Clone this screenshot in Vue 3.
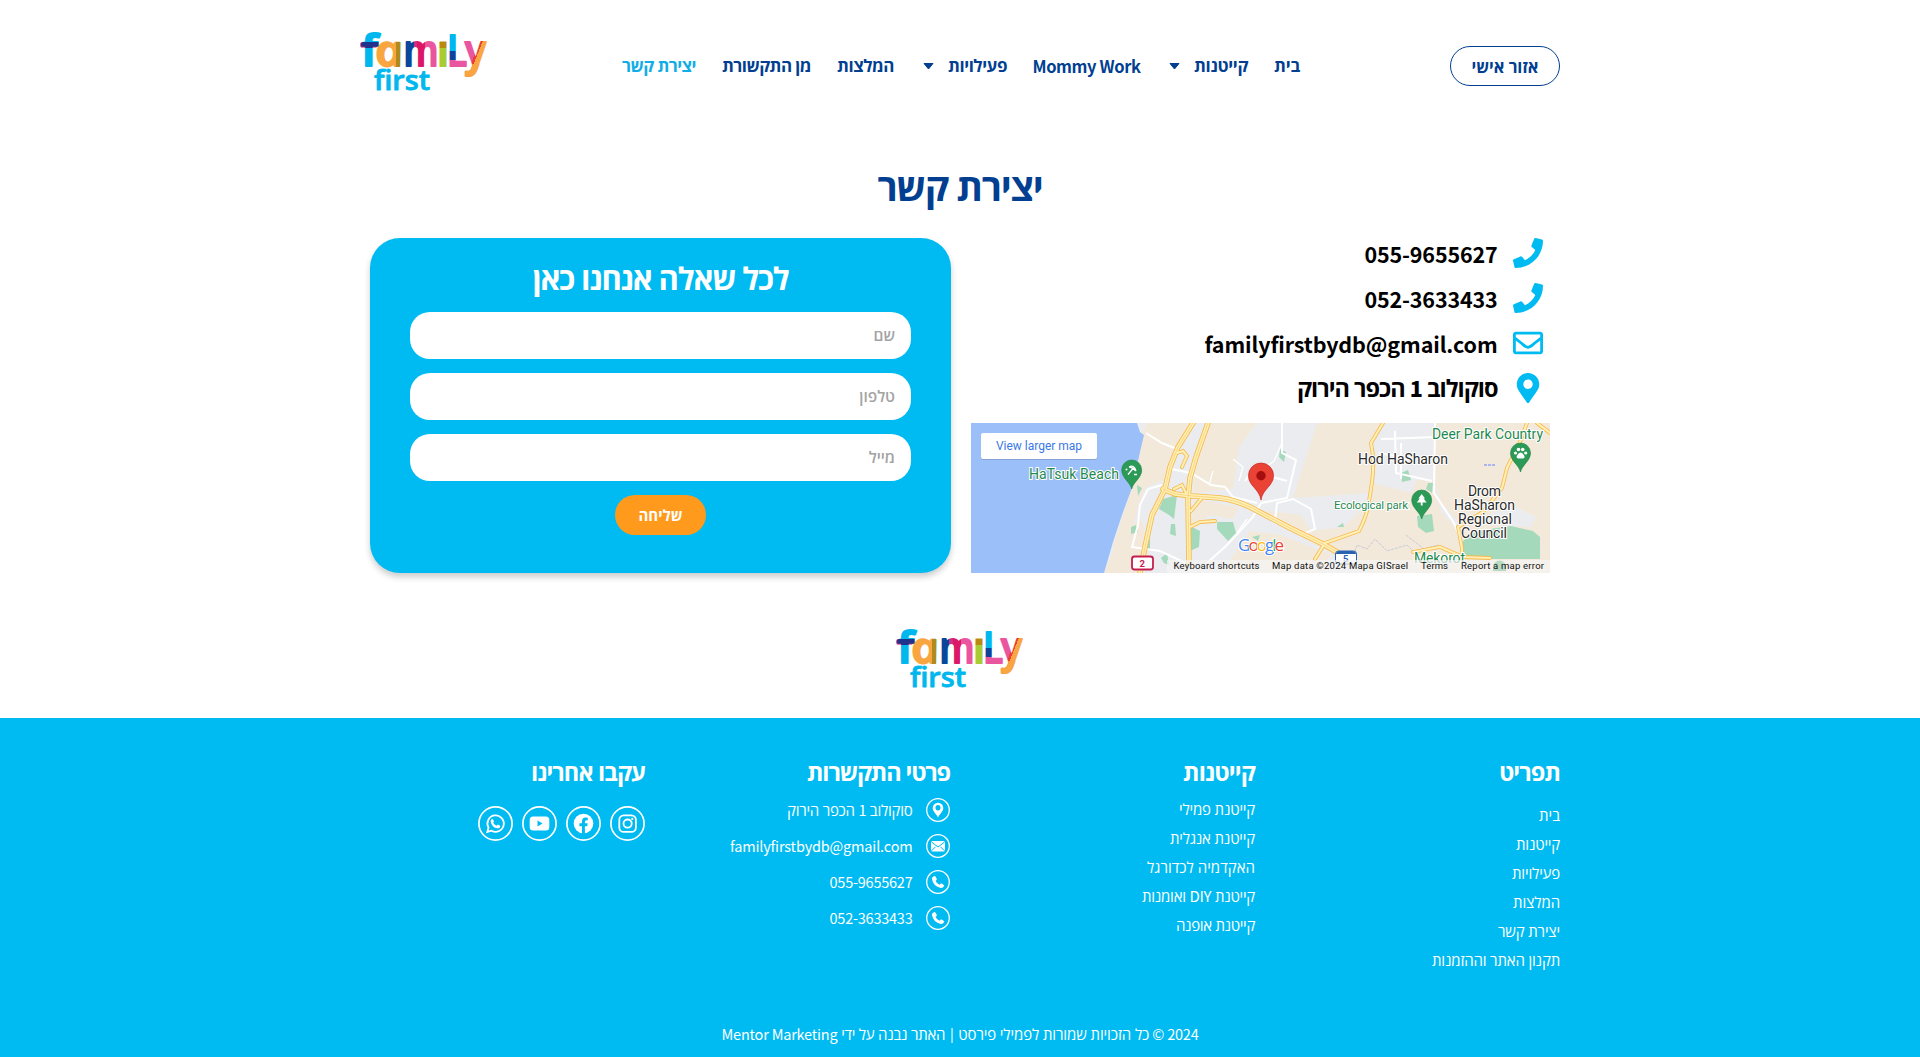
<script setup>
import { nextTick } from 'vue'

// Spreads letter spacing so that a label takes up the given width in pixels.
const vFit = {
  mounted(el, { value }) {
    nextTick(() => {
      const extra = value - el.getBoundingClientRect().width
      el.style.letterSpacing = (extra / el.textContent.trim().length).toFixed(3) + 'px'
    })
  }
}

const nav = [
  { t: 'בית', w: 26 },
  { t: 'קייטנות', w: 54, sub: true },
  { t: 'Mommy Work', w: 108, en: true },
  { t: 'פעילויות', w: 59, sub: true },
  { t: 'המלצות', w: 57 },
  { t: 'מן התקשורת', w: 89 },
  { t: 'יצירת קשר', w: 74, active: true }
]
const menu = [
  ['בית', 21], ['קייטנות', 44], ['פעילויות', 48], ['המלצות', 47], ['יצירת קשר', 62], ['תקנון האתר וההזמנות', 128]
]
const camps = [
  ['קייטנת פמילי', 76], ['קייטנת אנגלית', 85], ['האקדמיה לכדורגל', 108], ['קייטנת DIY ואומנות', 113], ['קייטנת אופנה', 79]
]
const fields = ['שם', 'טלפון', 'מייל']
const phonePath = 'M493.4 24.6l-104-24c-11.3-2.600-22.900 3.300-27.500 13.900l-48 112c-4.200 9.800-1.400 21.300 6.900 28l60.600 49.600c-36 76.700-98.900 140.500-177.200 177.200l-49.600-60.600c-6.800-8.300-18.200-11.100-28-6.900l-112 48C3.900 366.500-2 378.100.6 389.400l24 104C27.100 504.200 36.700 512 48 512c256.100 0 464-207.500 464-464 0-11.200-7.700-20.900-18.600-23.400z'
</script>

<template>
  <div class="page" dir="rtl">
    <svg width="0" height="0" class="defs" aria-hidden="true">
      <defs>
        <linearGradient id="lf" gradientUnits="userSpaceOnUse" x1="0" y1="0" x2="0" y2="36">
          <stop offset=".3" stop-color="#00b7ee" /><stop offset=".3" stop-color="#20348c" /><stop offset=".47" stop-color="#20348c" /><stop offset=".47" stop-color="#00b7ee" />
        </linearGradient>
        <linearGradient id="la" gradientUnits="userSpaceOnUse" x1="18" y1="0" x2="44" y2="0" gradientTransform="translate(7.400 0) skewX(-12)">
          <stop offset=".7" stop-color="#f9a540" /><stop offset=".7" stop-color="#b08a1c" /><stop offset=".84" stop-color="#b08a1c" /><stop offset=".84" stop-color="#a9cb35" />
        </linearGradient>
        <linearGradient id="lm" gradientUnits="userSpaceOnUse" x1="46" y1="0" x2="76" y2="0">
          <stop offset=".25" stop-color="#09479b" /><stop offset=".25" stop-color="#cd2f86" /><stop offset=".38" stop-color="#cd2f86" /><stop offset=".38" stop-color="#dc1866" /><stop offset=".62" stop-color="#dc1866" /><stop offset=".62" stop-color="#e9569f" />
        </linearGradient>
        <linearGradient id="li" gradientUnits="userSpaceOnUse" x1="0" y1="0" x2="0" y2="36">
          <stop offset=".48" stop-color="#b98a11" /><stop offset=".48" stop-color="#a9cb35" />
        </linearGradient>
        <linearGradient id="ll" gradientUnits="userSpaceOnUse" x1="0" y1="0" x2="0" y2="36">
          <stop offset=".56" stop-color="#00b7ee" /><stop offset=".56" stop-color="#10419a" /><stop offset=".8" stop-color="#10419a" /><stop offset=".8" stop-color="#e9569f" />
        </linearGradient>
        <linearGradient id="ly" gradientUnits="userSpaceOnUse" x1="107" y1="20" x2="122" y2="26">
          <stop offset=".52" stop-color="#e9569f" /><stop offset=".52" stop-color="#ea3e3c" /><stop offset=".68" stop-color="#ea3e3c" /><stop offset=".68" stop-color="#f9a540" />
        </linearGradient>
        <linearGradient id="ly2" gradientUnits="userSpaceOnUse" x1="0" y1="0" x2="0" y2="48">
          <stop offset=".68" stop-color="#f9a540" stop-opacity="0" /><stop offset=".7" stop-color="#f9a540" />
        </linearGradient>
        <clipPath id="ci"><rect x="78" y="10.500" width="10" height="27" /></clipPath>
        <symbol id="logo" viewBox="0 0 128 62">
          <g class="fam" stroke-width="2" stroke-linejoin="round" direction="ltr">
            <path d="M3 13.900H14.500" stroke="#e9569f" stroke-width="5.800" stroke-linecap="round" />
            <text x="1" y="34.500" fill="url(#lf)" stroke="url(#lf)" textLength="17" lengthAdjust="spacingAndGlyphs">f</text>
            <text class="slant" x="17.500" y="34.500" fill="url(#la)" stroke="url(#la)" transform="translate(-7.400 0) skewX(12)" textLength="28" lengthAdjust="spacingAndGlyphs">a</text>
            <text x="43.500" y="34.500" fill="url(#lm)" stroke="url(#lm)" textLength="35" lengthAdjust="spacingAndGlyphs">m</text>
            <text x="77" y="34.500" fill="url(#li)" stroke="url(#li)" clip-path="url(#ci)">i</text>
            <text x="87" y="34.500" fill="url(#ll)" stroke="url(#ll)" stroke-width="2" textLength="20" lengthAdjust="spacingAndGlyphs">L</text>
            <text x="105" y="34.500" fill="url(#ly)" stroke="url(#ly)" textLength="21" lengthAdjust="spacingAndGlyphs">y</text>
            <text x="105" y="34.500" fill="url(#ly2)" stroke="url(#ly2)" textLength="21" lengthAdjust="spacingAndGlyphs" aria-hidden="true">y</text>
          </g>
          <text class="fst" direction="ltr" x="14" y="58.500" fill="#00b7ee" stroke="#00b7ee" stroke-width=".8" stroke-linejoin="round" textLength="56" lengthAdjust="spacingAndGlyphs">first</text>
        </symbol>
      </defs>
    </svg>

    <header class="top">
      <a class="account"><span v-fit="67">אזור אישי</span></a>
      <nav class="nav">
        <a v-for="n in nav" :key="n.t" class="navitem" :class="{ active: n.active, en: n.en }">
          <span v-fit="n.w">{{ n.t }}</span>
          <svg v-if="n.sub" class="caret" width="11" height="7" viewBox="0 0 11 7"><path d="M1 .5h9L5.500 6z" fill="currentColor" stroke="currentColor" stroke-linejoin="round" /></svg>
        </a>
      </nav>
      <svg class="logo" width="128" height="62"><use href="#logo" /></svg>
    </header>

    <h1><span v-fit="165">יצירת קשר</span></h1>

    <main class="main">
      <section class="info">
        <ul class="contact">
          <li><svg width="30" height="30" viewBox="0 0 512 512"><path :d="phonePath" fill="currentColor" /></svg><span v-fit="133" class="en" dir="ltr">055-9655627</span></li>
          <li><svg width="30" height="30" viewBox="0 0 512 512"><path :d="phonePath" fill="currentColor" /></svg><span v-fit="133" class="en" dir="ltr">052-3633433</span></li>
          <li><svg width="30" height="30" viewBox="0 0 512 512"><path fill="currentColor" d="M464 64H48C21.500 64 0 85.500 0 112v288c0 26.500 21.500 48 48 48h416c26.500 0 48-21.500 48-48V112c0-26.500-21.500-48-48-48zm0 48v40.800c-22.400 18.300-58.200 46.700-134.600 106.500-16.800 13.200-50.200 45.100-73.400 44.700-23.200.4-56.600-31.500-73.400-44.700C106.200 199.500 70.400 171.100 48 152.800V112h416zM48 400V214.400c22.900 18.300 55.400 43.900 104.900 82.600 21.900 17.200 60.100 55.200 103.100 55 42.700.2 80.500-37.200 103.100-54.900 49.500-38.800 82-64.400 104.900-82.700V400H48z" /></svg><span v-fit="293" class="en" dir="ltr">familyfirstbydb@gmail.com</span></li>
          <li><svg width="30" height="30" viewBox="-64 0 512 512"><path fill="currentColor" d="M172.300 501.700C27 291 0 269.400 0 192 0 86 86 0 192 0s192 86 192 192c0 77.400-27 99-172.300 309.700-9.500 13.800-29.900 13.800-39.400 0zM192 272c44.200 0 80-35.800 80-80s-35.800-80-80-80-80 35.800-80 80 35.800 80 80 80z" /></svg><span v-fit="200.500">סוקולוב <b class="en">1</b> הכפר הירוק</span></li>
        </ul>
        <svg class="map" width="579" height="150" viewBox="0 0 579 150" direction="ltr">
          <rect width="579" height="150" fill="#eaecef" />
          <g fill="#f3e9db">
            <path d="M172 8L176 0H222L206 28 198 55 175 64 168 80 156 128 142 124 160 66z" />
            <path d="M240 0H286L268 24 262 66 222 70 224 40zM346 0H411L400 20 402 70 322 75zM279 86L330 92 340 108 372 104 396 82 402 60 440 70 448 50 463 60 470 90 490 108V150H400L376 140 320 108zM464 0H579V150H492V104L470 80 464 60z" />
            <path d="M224 76L268 84 262 96 240 92 220 104zM279 108L310 112 360 132 350 150H250z" />
            <path d="M150 110L170 96 174 110 166 150H133z" />
          </g>
          <path d="M520 90l25-6 20 10-5 10-40-2zM410 6l50 8-2 44-48-4z" fill="#eaecef" />
          <path d="M0 0H166L169 9 173 12 169 29 161 65 152 89 142 119 133 150H0z" fill="#9bbff9" />
          <g fill="#a4dabb">
            <path d="M188 86L192 76 206 72 203 96 198 92zM246 99L262 99 265 110 257 118 246 106zM219 103L229 108 228 124 219 128zM200 101h4l1 12-6-2zM160 104l5-2 2 7-7 2zM446 93l15-2 2 17-8 2-8-6zM492 118L506 108 540 103 562 108 569 114V136H492zM430 50l7-3 3 10-9 2zM457 60h5l-1 10-6-4zM309 26l6 3-2 10-5-5zM281 114l8-2-2 6zM366 104l6-4 1 4zM166 62l5 3-4 8zM173 116h6v10h-6zM190 135l6-5 2 12-5-2z" />
          </g>
          <g fill="none" stroke="#fff" stroke-width="2">
            <path d="M175 10l16 10 20 8M191 62l-14 4-8 16-2 20-6 22 28 4 30 14M200 46l20 4 20 12 14 2 8 10 24 6M290 80l-8 14-26 28-20 18M311 0v30l14 7-9 38-26 5M284 44l-10 14M294 52l22 6M424 8l1 42 36 8M410 16l55-2M464 0l-1 70 20 30 8 20M322 76l18 10 4 20-14 6-26-14 2-18zM430 20v36M408 30l22 4" />
            <path d="M242 48l-4 14M262 36l10 8-4 14M311 20l-8 18-14 10M276 96l-10 14" stroke-width="1.300" />
          </g>
          <path d="M380 140l6-18 10 4 8-10 12 12 20-6 14 14 18-4M435 112l18 14 14-4" fill="none" stroke="#c7cbda" stroke-dasharray="3 1" />
          <g v-for="k in 3" :key="k" fill="none" stroke-linecap="round" :stroke="['#f6b84a', '#ffefb5', '#f8cd6c'][k - 1]">
            <path :stroke-width="[5.500, 3.800, .7][k - 1]" d="M222 0L207 24 199 44 194 66 181 92 174 124 169 150M237 0L225 34 219 55 217 75 218 140M192 66L204 71 222 73 249 75Q264 77 279 84L319 105 352 121 366 129" />
            <path v-if="k < 3" :stroke-width="[3.800, 2.200][k - 1]" d="M412 0L400 20Q404 38 401 59T396 88 388 108L354 120 344 136M556 0L549 19 536 45 531 65 512 89 487 104 491 125 491 134M566 0L579 10M442 129L469 124 492 134 519 135M206 30L212 28 216 33 211 44M219 104L229 99 244 98M203 66l8-4 5 10M220 88l10-12" />
          </g>
          <path d="M513 42h11" stroke="#a9b4f0" stroke-width="2" stroke-dasharray="3 1" />

          <g class="lbl">
            <g class="grn">
              <text x="58" y="56" textLength="90" font-size="14">HaTsuk Beach</text>
              <text x="461" y="16" textLength="111" font-size="14">Deer Park Country</text>
              <text x="363" y="85.500" textLength="74" font-size="11.500">Ecological park</text>
              <text x="443" y="140" textLength="51" font-size="14">Mekorot</text>
            </g>
            <text x="387" y="41" textLength="90" font-size="14">Hod HaSharon</text>
            <text x="497" y="73" textLength="33" font-size="14">Drom</text>
            <text x="483" y="87" textLength="61" font-size="14">HaSharon</text>
            <text x="487" y="101" textLength="54" font-size="14">Regional</text>
            <text x="490" y="115" textLength="46" font-size="14">Council</text>
          </g>
          <g v-for="p in [[160.7, 37], [549.500, 20], [450.700, 67]]" :key="p[0]" :transform="`translate(${p[0]} ${p[1]})`">
            <path d="M0 29C-1.500 22-10 18-10 10A10 10 0 0 1 10 10C10 18 1.500 22 0 29z" fill="#2b9a56" stroke="#1d7f42" stroke-width=".6" />
          </g>
          <path d="M158 44q5-3 7 4M158 44q3 0 7 4M162 45.500l-5 6M163 51.500h3" fill="none" stroke="#fff" stroke-width="1.300" />
          <g fill="#fff">
            <circle cx="155.500" cy="46.500" r="1" />
            <circle cx="544.500" cy="30" r="1.600" /><circle cx="547.500" cy="26.500" r="1.800" /><circle cx="551.700" cy="26.500" r="1.800" /><circle cx="554.700" cy="30" r="1.600" />
            <path d="M549.600 29.500q2 0 3.500 3t-1.500 3h-4q-3 0-1.500-3t3.500-3z" />
            <path d="M450.700 71l3.300 4.500h-1.400l3 4h-4v3h-1.800v-3h-4l3-4h-1.400z" />
          </g>
          <path d="M522 144a6.500 6.500 0 0 1 13 0v4h-13z" fill="#2b9a56" />
          <path d="M290 77C288.500 66 277.500 63 277.500 52.500A12.500 12.500 0 0 1 302.500 52.500C302.500 63 291.500 66 290 77z" fill="#ea4335" stroke="#c5221f" stroke-width=".7" />
          <circle cx="290" cy="52.700" r="4.700" fill="#a50e0e" />
          <rect x="364.500" y="128" width="21" height="13" rx="3" fill="#fff" stroke="#2b62b0" />
          <path d="M365 131q0-3 4-3h12q4 0 4 3z" fill="#2b62b0" />
          <text x="372" y="138.500" class="road" fill="#2b62b0">5</text>
          <rect x="196" y="137" width="383" height="13" fill="#f5f5f5" opacity=".7" />
          <rect x="161" y="133.500" width="21" height="13" rx="2.500" fill="#fff" stroke="#c41e4e" stroke-width="1.800" />
          <text x="168.500" y="143.500" class="road" fill="#c41e4e">2</text>
          <text class="goog" x="267" y="127.500" textLength="46"><tspan fill="#4285f4">G</tspan><tspan fill="#ea4335">o</tspan><tspan fill="#fbbc04">o</tspan><tspan fill="#4285f4">g</tspan><tspan fill="#34a853">l</tspan><tspan fill="#ea4335">e</tspan></text>
          <g class="attr">
            <text x="202.500" y="146" textLength="86">Keyboard shortcuts</text>
            <text x="301" y="146" textLength="136">Map data ©2024 Mapa GISrael</text>
            <text x="450" y="146" textLength="27">Terms</text>
            <text x="490" y="146" textLength="83">Report a map error</text>
          </g>
          <rect x="10" y="11" width="116" height="26" rx="2" fill="#00000022" />
          <rect x="10" y="10" width="116" height="26" rx="2" fill="#fff" />
          <text x="25" y="27" textLength="86" class="larger">View larger map</text>
        </svg>
      </section>

      <section class="card">
        <h2><span v-fit="256">לכל שאלה אנחנו כאן</span></h2>
        <form class="form">
          <input v-for="f in fields" :key="f" type="text" :placeholder="f">
          <button type="button"><span v-fit="44">שליחה</span></button>
        </form>
      </section>
    </main>

    <div class="midlogo"><svg class="logo" width="128" height="62"><use href="#logo" /></svg></div>

    <footer class="foot">
      <div class="cols">
        <div class="col">
          <h3><span v-fit="61">תפריט</span></h3>
          <ul class="links menu"><li v-for="m in menu" :key="m[0]"><span v-fit="m[1]">{{ m[0] }}</span></li></ul>
        </div>
        <div class="col">
          <h3><span v-fit="72">קייטנות</span></h3>
          <ul class="links"><li v-for="m in camps" :key="m[0]"><span v-fit="m[1]"><template v-for="(w, i) in m[0].split(' ')" :key="i">{{ i ? ' ' : '' }}<span v-if="w === 'DIY'" class="en">{{ w }}</span><template v-else>{{ w }}</template></template></span></li></ul>
        </div>
        <div class="col">
          <h3><span v-fit="143">פרטי התקשרות</span></h3>
          <ul class="details">
            <li>
              <svg width="24" height="24" viewBox="0 0 24 24"><circle cx="12" cy="12" r="11.300" class="ring" /><path d="M12 19.500C10.500 16 6.700 13.500 6.700 10a5.300 5.300 0 0 1 10.600 0c0 3.500-3.800 6-5.300 9.500z" fill="#fff" /><path d="M9.500 9.500a2.500 2.500 0 0 1 5 0q0 3-2.500 3t-2.500-3z" fill="#00bbf2" /></svg>
              <span v-fit="125.500">סוקולוב <span class="en">1</span> הכפר הירוק</span>
            </li>
            <li>
              <svg width="24" height="24" viewBox="0 0 24 24"><circle cx="12" cy="12" r="11.300" class="ring" /><rect x="5" y="7" width="14" height="10.500" rx="1.500" fill="#fff" /><path d="M5.500 8l6.500 5 6.500-5M5.500 16.800l4-4M18.500 16.800l-4-4" fill="none" stroke="#00bbf2" /></svg>
              <span v-fit="182.500" class="en" dir="ltr">familyfirstbydb@gmail.com</span>
            </li>
            <li v-for="p in ['055-9655627', '052-3633433']" :key="p">
              <svg width="24" height="24" viewBox="0 0 24 24"><circle cx="12" cy="12" r="11.300" class="ring" /><path d="M6.400 7.300L8.300 6q.7-.3 1.100.4l1.300 2.300q.3.700-.2 1.200l-1 .9q1 2.600 4 4l1.300-1.200q.5-.3 1 0l2 1.300q.7.500.3 1.200-1.300 2.200-3.400 1.900-7.300-1.500-8.700-8.700 0-1.200.4-2z" fill="#fff" /></svg>
              <span v-fit="83" class="en" dir="ltr">{{ p }}</span>
            </li>
          </ul>
        </div>
        <div class="col">
          <h3><span v-fit="114">עקבו אחרינו</span></h3>
          <div class="social">
            <svg width="35" height="35" viewBox="0 0 35 35"><circle cx="17.500" cy="17.500" r="16.600" class="ring s" /><rect x="9.300" y="9.300" width="16.600" height="16.600" rx="4.500" class="ln" /><circle cx="17.600" cy="17.600" r="4.100" class="ln" /><circle cx="22.300" cy="12.900" r="1.100" fill="#fff" /></svg>
            <svg width="35" height="35" viewBox="0 0 35 35"><circle cx="17.500" cy="17.500" r="16.600" class="ring s" /><circle cx="17.500" cy="17.500" r="9.800" fill="#fff" /><path d="M16 27.800v-7.500h-2.600v-3H16v-2q0-3.700 3.600-3.800l2.200.2v2.500h-1.300q-1.600 0-1.600 1.500v1.600h2.800l-.5 3h-2.300v7.500z" fill="#00bbf2" /></svg>
            <svg width="35" height="35" viewBox="0 0 35 35"><circle cx="17.500" cy="17.500" r="16.600" class="ring s" /><rect x="7.700" y="10.500" width="19.600" height="14" rx="3.500" fill="#fff" /><path d="M15.500 14.500l5 3-5 3z" fill="#00bbf2" /></svg>
            <svg width="35" height="35" viewBox="0 0 35 35"><circle cx="17.500" cy="17.500" r="16.600" class="ring s" /><path d="M9.300 25.900l1.200-4.300a8.200 8.200 0 1 1 3.100 3.100z" class="ln" /><path d="M13.400 13.300l1.300-.4 1.300 2.600-.8 1.200q1.200 2.200 3.300 3l1.200-1.200 2.500 1.200q.2 2.500-2.600 2.600-5.800-.8-6.900-6.600.1-1.600.7-2.400z" fill="#fff" /></svg>
          </div>
        </div>
      </div>
      <p class="copy"><span v-fit="49.500" class="en">2024 ©&nbsp;</span><span v-fit="191">כל הזכויות שמורות לפמילי פירסט</span><span class="bar">|</span><span v-fit="108">האתר נבנה על ידי&nbsp;</span><span v-fit="116" class="en" dir="ltr">Mentor Marketing</span></p>
    </footer>
  </div>
</template>

<style>
body { margin: 0; background: #fff; }
</style>

<style scoped>
.page { position: relative; width: 1920px; height: 1057px; overflow: hidden; background: #fff; display: flex; flex-direction: column; font-family: "Open Sans", "Noto Sans CJK SC", sans-serif; color: #023f91; }
.page * { box-sizing: border-box; }
.defs { position: absolute; }
.en { font-family: "Noto Sans CJK SC", "Open Sans", sans-serif; }
span { white-space: nowrap; display: inline-block; flex: none; }
ul { list-style: none; margin: 0; padding: 0; }
h1, h2, h3, p { margin: 0; }
.logo { display: block; flex: none; }
.fam text { font: 600 43px "Open Sans", sans-serif; }
.fam text.slant { font-style: italic; }
.fst { font: 600 27px "Open Sans", sans-serif; }

.top { width: 1200px; margin: 0 auto; height: 132px; display: flex; align-items: flex-start; }
.account { width: 110px; height: 40px; margin-top: 46px; border: 1px solid #023f91; border-radius: 20px; display: flex; justify-content: center; font-size: 16.500px; font-weight: 700; line-height: 39px; }
.nav { display: flex; margin: 46px 150px 0 0; gap: 26px; height: 40px; line-height: 40px; font-size: 17px; font-weight: 700; }
.navitem { display: flex; align-items: center; }
.navitem.en { font-size: 16.500px; line-height: 38px; }
.navitem.en span { margin: -1px -.5px 0; }
.navitem.active { color: #12ade6; }
.caret { margin: 1px 14px 0 3px; }
.top .logo { margin: 31px auto 0 0; }

h1 { text-align: center; font-size: 38px; line-height: 50px; margin-top: 29px; }
.main { width: 1180px; margin: 27px auto 0; display: flex; justify-content: space-between; height: 335px; }
.info { width: 579px; display: flex; flex-direction: column; justify-content: space-between; }
.contact { padding: 0 7.500px; }
.contact li { height: 45px; display: flex; align-items: flex-start; gap: 15px; font-size: 23.500px; font-weight: 700; line-height: 30px; color: #000; }
.contact svg { color: #00bbf2; flex: none; }
.contact .en { font-size: 21.500px; line-height: 31px; }
.contact b.en { line-height: 0; }
.map { display: block; flex: none; }
.lbl text { font-family: Roboto, sans-serif; fill: #2b2b2b; stroke: #fff; stroke-width: 2px; paint-order: stroke; }
.lbl .grn text { fill: #1f8a50; }
.road { font: 700 9.500px Roboto, sans-serif; }
.goog { font: 500 17px "Open Sans", sans-serif; stroke: #fff; stroke-width: 2px; paint-order: stroke; }
.attr text { font: 9.500px Roboto, sans-serif; fill: #111; }
.larger { font: 12px Roboto, sans-serif; fill: #3b78e7; }

.card { width: 581px; height: 335px; border-radius: 30px; background: #00bbf2; padding: 18px 40px 0; box-shadow: 0 4px 6px rgba(0, 0, 0, .2); }
h2 { color: #fff; text-align: center; font-size: 31px; line-height: 44px; height: 56px; }
.form { display: flex; flex-direction: column; align-items: center; gap: 14px; }
.form input { width: 501px; height: 47px; border: 0; border-radius: 20px; background: #fff; padding: 0 16px 1px; font: 600 15.500px "Open Sans", sans-serif; letter-spacing: 0; }
.form input::placeholder { color: #a3a3a3; opacity: 1; }
.form button { width: 91px; height: 40px; border: 0; border-radius: 20px; background: #ff9a1c; color: #fff; font: 700 15px/38px "Open Sans", sans-serif; padding: 0; }

.midlogo { margin: 55px auto 0; height: 90px; }
.foot { background: #00bbf2; flex: 1; color: #fff; }
.cols { width: 1200px; margin: 0 auto; display: flex; height: 300px; padding-top: 37px; }
.col { width: 305px; flex: none; }
h3 { font-size: 23.500px; line-height: 34px; height: 39px; }
.links { font-size: 15px; line-height: 29px; padding-top: 1px; }
.links.menu { padding-top: 7px; }
.links li { height: 29px; }
.links .en { display: inline; line-height: 0; }
.details { padding-top: 4px; font-size: 15px; line-height: 24px; }
.details li { display: flex; gap: 13.500px; height: 36px; }
.details .en { font-size: 14.500px; line-height: 23px; }
.details span .en { line-height: 0; display: inline; }
.ring { fill: none; stroke: #fff; stroke-width: 1.300px; }
.ring.s { stroke-width: 1.700px; }
.ln { fill: none; stroke: #fff; stroke-width: 1.800px; }
.social { display: flex; gap: 9px; padding-top: 12px; }
.copy { display: flex; justify-content: center; font-size: 15px; line-height: 24px; padding-top: 4px; }
.copy .en { font-size: 14.500px; }
.bar { width: 13px; text-align: center; font-size: 14px; }
</style>
